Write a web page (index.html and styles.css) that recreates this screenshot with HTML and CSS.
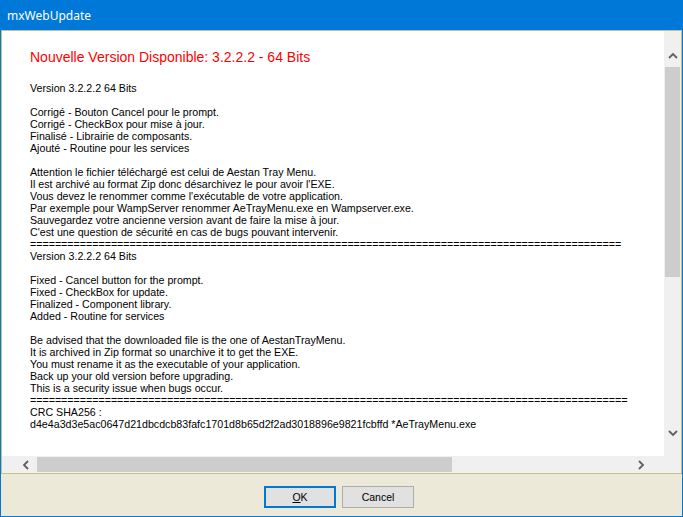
FILE: index.html
```html
<!DOCTYPE html>
<html lang="fr">
<head>
<meta charset="utf-8">
<title>mxWebUpdate</title>
<link rel="stylesheet" href="styles.css">
</head>
<body>
<div class="window">
  <header class="titlebar"><span class="title">mxWebUpdate</span></header>
  <div class="frame">
    <div class="viewport">
      <div class="doc">
        <h1 class="headline">Nouvelle Version Disponible: 3.2.2.2 - 64 Bits</h1>
        <p class="para">Version 3.2.2.2 64 Bits</p>
        <p class="para">Corrigé - Bouton Cancel pour le prompt.<br>Corrigé - CheckBox pour mise à jour.<br>Finalisé - Librairie de composants.<br>Ajouté - Routine pour les services</p>
        <p class="para">Attention le fichier téléchargé est celui de Aestan Tray Menu.<br>Il est archivé au format Zip donc désarchivez le pour avoir l'EXE.<br>Vous devez le renommer comme l'exécutable de votre application.<br>Par exemple pour WampServer renommer AeTrayMenu.exe en Wampserver.exe.<br>Sauvegardez votre ancienne version avant de faire la mise à jour.<br>C'est une question de sécurité en cas de bugs pouvant intervenir.<br>===============================================================================================<br>Version 3.2.2.2 64 Bits</p>
        <p class="para">Fixed - Cancel button for the prompt.<br>Fixed - CheckBox for update.<br>Finalized - Component library.<br>Added - Routine for services</p>
        <p class="para">Be advised that the downloaded file is the one of AestanTrayMenu.<br>It is archived in Zip format so unarchive it to get the EXE.<br>You must rename it as the executable of your application.<br>Back up your old version before upgrading.<br>This is a security issue when bugs occur.<br>================================================================================================<br>CRC SHA256 :<br>d4e4a3d3e5ac0647d21dbcdcb83fafc1701d8b65d2f2ad3018896e9821fcbffd *AeTrayMenu.exe</p>
      </div>
    </div>
    <div class="vscroll">
      <div class="arrow"><svg width="10" height="7" viewBox="0 0 10 7"><polyline points="1,6 5,2 9,6" fill="none" stroke="#606060" stroke-width="1.8"/></svg></div>
      <div class="vthumb"></div>
      <div class="fill"></div>
      <div class="arrow"><svg width="10" height="7" viewBox="0 0 10 7"><polyline points="1,1 5,5 9,1" fill="none" stroke="#606060" stroke-width="1.8"/></svg></div>
    </div>
    <div class="hscroll">
      <div class="arrow"><svg width="7" height="10" viewBox="0 0 7 10"><polyline points="6,1 2,5 6,9" fill="none" stroke="#606060" stroke-width="1.8"/></svg></div>
      <div class="hthumb"></div>
      <div class="fill"></div>
      <div class="arrow"><svg width="7" height="10" viewBox="0 0 7 10"><polyline points="1,1 5,5 1,9" fill="none" stroke="#606060" stroke-width="1.8"/></svg></div>
    </div>
    <div class="corner"></div>
  </div>
  <footer class="buttons">
    <div class="btn btn-default"><span class="accel">O</span>K</div>
    <div class="btn">Cancel</div>
  </footer>
</div>
</body>
</html>
```
FILE: styles.css
```css
html, body {
  margin: 0;
  padding: 0;
}
body {
  width: 683px;
  height: 517px;
  overflow: hidden;
  font-family: "Liberation Sans", Arial, sans-serif;
}
.window {
  display: flex;
  flex-direction: column;
  width: 683px;
  height: 517px;
  box-sizing: border-box;
  border: 1px solid #0078d7;
  border-top: 0;
  background: #ece9d8;
}
.titlebar {
  height: 30px;
  flex: none;
  background: #0078d7;
  display: flex;
  align-items: center;
  padding-left: 6px;
  color: #fff;
  font-family: "Noto Sans", "Open Sans", sans-serif;
  font-size: 12px;
}
.title {
  position: relative;
  top: 0;
}
.frame {
  height: 444px;
  flex: none;
  box-sizing: border-box;
  border: 1px solid #cbbd8c;
  display: grid;
  grid-template-columns: 1fr 17px;
  grid-template-rows: 1fr 17px;
}
.viewport {
  background: #fff;
  overflow: hidden;
}
.doc {
  padding: 18px 0 0 28px;
  font-size: 10.67px;
  line-height: 12px;
  color: #000;
  white-space: nowrap;
}
.headline {
  margin: 0 0 17px;
  font-size: 14px;
  line-height: 16px;
  font-weight: normal;
  color: #ff0000;
}
.para {
  margin: 0 0 12px;
}
.vscroll {
  background: #f0f0f0;
  display: flex;
  flex-direction: column;
  padding: 16px 0 14px;
}
.vscroll .arrow {
  height: 17px;
  display: flex;
  align-items: center;
  justify-content: center;
}
.vthumb {
  height: 210px;
  margin: 3px 1px 0;
  background: #cdcdcd;
}
.fill {
  flex: 1;
}
.hscroll {
  background: #f0f0f0;
  display: flex;
  padding: 0 14px 0 15px;
}
.hscroll .arrow {
  width: 17px;
  display: flex;
  align-items: center;
  justify-content: center;
}
.hthumb {
  width: 415px;
  margin: 1px 0 1px 3px;
  background: #cdcdcd;
}
.corner {
  background: #f0f0f0;
}
.buttons {
  flex: 1;
  display: flex;
  justify-content: center;
  align-items: flex-start;
  gap: 6px;
  padding: 12px 5px 0 0;
}
.btn {
  width: 72px;
  height: 22px;
  box-sizing: border-box;
  border: 1px solid #adadad;
  background: #e1e1e1;
  display: flex;
  align-items: center;
  justify-content: center;
  font-size: 10.5px;
  color: #000;
}
.btn-default {
  border: 2px solid #0078d7;
}
.accel {
  text-decoration: underline;
}
```
